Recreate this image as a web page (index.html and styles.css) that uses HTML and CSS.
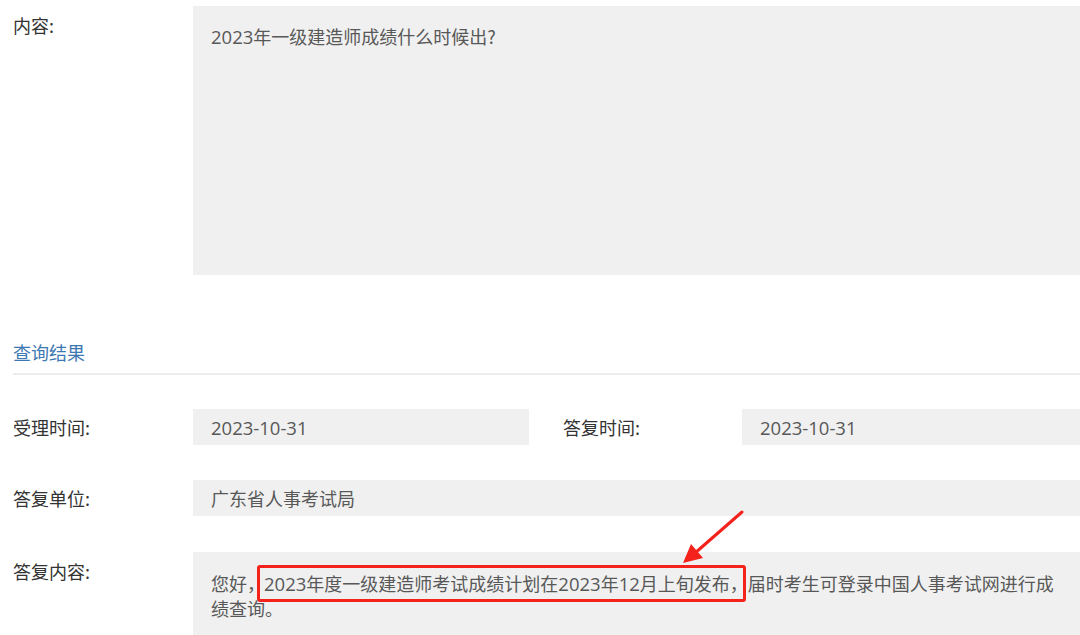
FILE: index.html
```html
<!DOCTYPE html>
<html lang="zh">
<head>
<meta charset="utf-8">
<link rel="stylesheet" href="styles.css">
</head>
<body>
<div class="page">
  <div class="row row-content">
    <div class="label">内容:</div>
    <div class="box box-tall"><span class="num">2023</span>年一级建造师成绩什么时候出?</div>
  </div>

  <div class="section-title">查询结果</div>
  <div class="divider"></div>

  <div class="row row-short">
    <div class="label">受理时间:</div>
    <div class="box box-half"><span class="num">2023-10-31</span></div>
    <div class="label label-mid">答复时间:</div>
    <div class="box box-half2"><span class="num">2023-10-31</span></div>
  </div>

  <div class="row row-short row-unit">
    <div class="label">答复单位:</div>
    <div class="box box-full">广东省人事考试局</div>
  </div>

  <div class="row row-answer">
    <div class="label">答复内容:</div>
    <div class="box box-answer">您好，<span class="hl"><span class="num">2023</span>年度一级建造师考试成绩计划在<span class="num">2023</span>年<span class="num">12</span>月上旬发布，</span>届时考生可登录中国人事考试网进行成绩查询。</div>
  </div>

  <svg class="arrow" width="70" height="60" viewBox="0 0 70 60">
    <line x1="63" y1="4" x2="16" y2="45" stroke="#f5221b" stroke-width="3" stroke-linecap="round"/>
    <polygon points="4,55 12,36 24,50" fill="#f5221b"/>
  </svg>
</div>
</body>
</html>
```

FILE: styles.css
```css
html, body {
  margin: 0;
  padding: 0;
  background: #ffffff;
}
body {
  font-family: "Noto Sans CJK SC", "Noto Sans", sans-serif;
  font-size: 18px;
  font-feature-settings: "halt";
  color: #333333;
  width: 1080px;
  height: 635px;
  overflow: hidden;
}
.page {
  position: relative;
  padding-left: 13px;
}
.row {
  display: flex;
  align-items: flex-start;
}
.label {
  width: 180px;
  flex: none;
  color: #333333;
  line-height: 24px;
}
.label-mid {
  width: 179px;
  margin-left: 34px;
}
.box {
  background: #f0f0f0;
  color: #585858;
  box-sizing: border-box;
  padding-left: 18px;
}
.num {
  font-family: "Open Sans", "Noto Sans", sans-serif;
  font-size: 18.5px;
}
.row-content {
  padding-top: 6px;
}
.row-content .label {
  padding-top: 7px;
}
.box-tall {
  width: 887px;
  height: 269px;
  padding-top: 18px;
  line-height: 24px;
}
.section-title {
  margin-top: 65px;
  color: #3e78b2;
  line-height: 24px;
}
.divider {
  margin-top: 9px;
  height: 2px;
  background: #ececec;
}
.row-short {
  align-items: center;
  margin-top: 34px;
}
.row-short .box {
  height: 36px;
  line-height: 36px;
}
.box-half {
  width: 336px;
}
.box-half2 {
  width: 338px;
}
.box-full {
  width: 887px;
}
.row-unit {
  margin-top: 35px;
}
.row-answer {
  margin-top: 36px;
}
.row-answer .label {
  padding-top: 7px;
}
.box-answer {
  width: 887px;
  height: 90px;
  padding-top: 19px;
  padding-right: 18px;
  line-height: 24px;
}
.hl {
  border: 3px solid #f5221b;
  border-radius: 3px;
  padding: 2px 4px 3px 4px;
  margin-left: 1px;
  margin-right: 2px;
}
.arrow {
  position: absolute;
  left: 679px;
  top: 508px;
}
```
